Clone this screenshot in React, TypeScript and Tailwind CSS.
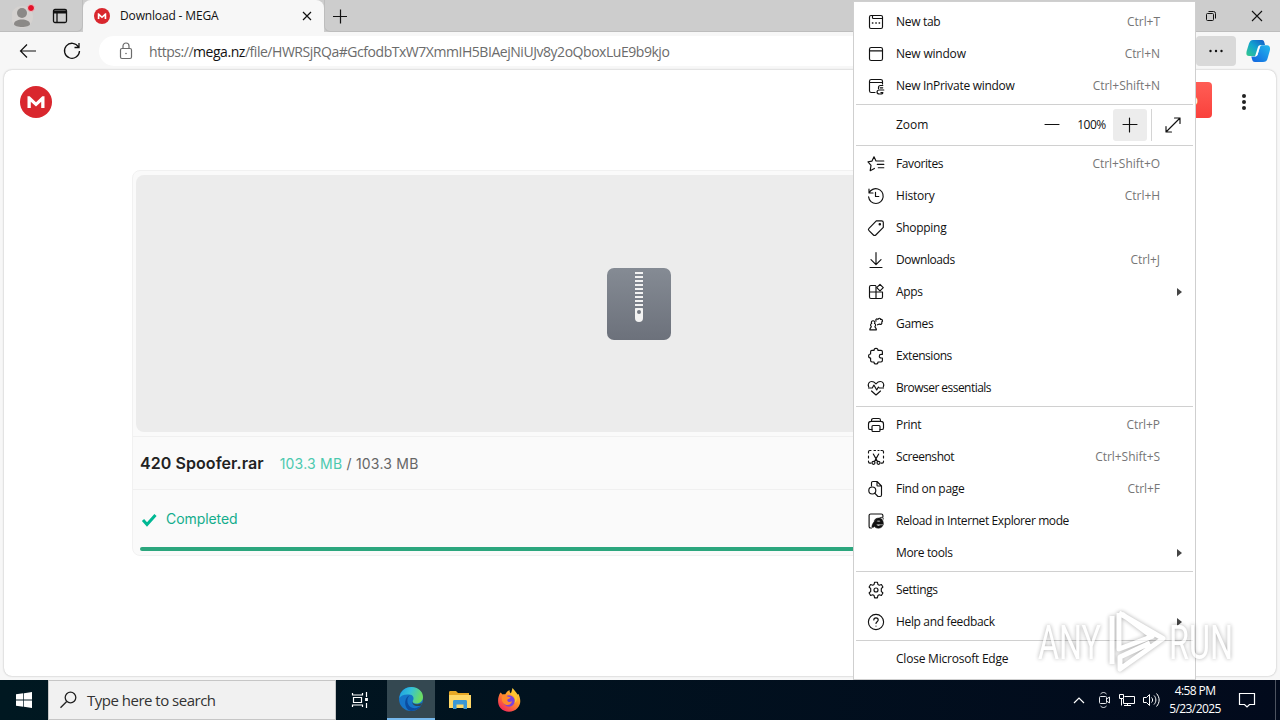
import type { ReactNode } from "react";
import clsx from "clsx";

type MenuEntry = {
  label: string;
  icon?: ReactNode;
  shortcut?: string;
  submenu?: boolean;
  spacing?: string;
};

function Icon({ children, size = 20 }: { children: ReactNode; size?: number }) {
  return (
    <svg
      width={size}
      height={size}
      viewBox="0 0 20 20"
      fill="none"
      stroke="#111"
      strokeWidth="1.15"
      strokeLinecap="round"
      strokeLinejoin="round"
      className="shrink-0">
      {children}
    </svg>
  );
}

const icons = {
  newTab: (
    <>
      <rect x="3.5" y="3.5" width="13" height="13" rx="1.5" />
      <path d="M6.500 3.500v2.200c0 .5.3.8.8.8h9.200" />
      <path d="M6.500 11h.3M9.900 11h.3M13.200 11h.3" strokeWidth="1.6" />
    </>
  ),
  newWindow: <><rect x="3.5" y="3.5" width="13" height="13" rx="1.8" /><path d="M3.5 6.8h13" /></>,
  inPrivate: (
    <>
      <path d="M9 16.5H5.3a1.8 1.8 0 01-1.8-1.8V5.3c0-1 .8-1.8 1.8-1.8h9.4c1 0 1.8.8 1.8 1.8V8M3.5 6.5h13" />
      <path d="M16.8 9.5h-2.3a2 2 0 00-2 2v1.2M14.2 11.8h2.5M17.8 14h-4.3c-3.3 0-3.3 4 0 4h2.2c.8 0 1.2-.6 1.2-1.4h-2" />
    </>
  ),
  favorites: (
    <path d="M8 2.800L6 7.100l-4 .7 3 3.500-.8 5.400 4.200-2.300M8 2.800l2 4.200h7.800M11.300 10.400h6.500M12.300 13.700h5.500" />
  ),
  history: <><path d="M3 3v4h4M3.1 7A7.4 7.4 0 1110 17.5c-4 0-7-3-7.4-6.6" /><path d="M9.5 6.3v4.2h3.3" /></>,
  shopping: (
    <>
      <path d="M10.3 2.8h5.2c1 0 1.8.8 1.8 1.8v4.8L9.8 17c-.7.7-1.7.7-2.4 0L3 12.7c-.7-.7-.7-1.7 0-2.4z" />
      <circle cx="13.8" cy="6.3" r=".7" fill="#111" />
    </>
  ),
  downloads: <path d="M10 2.5v12M5 9.7l5 5 5-5M4 17.5h12" />,
  apps: (
    <>
      <path d="M9.500 3.500H5c-.8 0-1.500.7-1.500 1.500v10c0 .8.7 1.500 1.500 1.500h10c.8 0 1.500-.7 1.500-1.500v-5H3.500M10 4v12.500" />
      <path d="M14 2.300l3.300 3.300L14 8.900l-3.300-3.300z" />
    </>
  ),
  games: (
    <>
      <path d="M3.800 15.800h6.600c0-2-1.500-2-1.500-3.300 1.200-.8.8-2.800-.4-3 1-1.500-.2-2.800-1.400-2.800s-2.400 1.300-1.400 2.800c-1.200.2-1.600 2.200-.4 3 0 1.300-1.500 1.300-1.500 3.300z" />
      <path d="M10 7.200C9.200 5 11.300 4.300 12 5.500c.3-1.700 2.700-1.500 2.500 0 1.800-.6 2.900 1.500 1.200 2.500.9 1.700-.9 3.100-2.300 2l-1.900.8" />
    </>
  ),
  extensions: (
    <path d="M8 5a2 2 0 014 0h3c.8 0 1.4.6 1.4 1.4V9h-1.3a1.8 1.8 0 000 3.6h1.3v2.600c0 .8-.6 1.400-1.400 1.400h-3a2 2 0 01-4 0H6c-.8 0-1.400-.6-1.400-1.400v-2.600a2 2 0 010-4V6.400C4.600 5.600 5.200 5 6 5z" transform="translate(0 -.6)" />
  ),
  essentials: (
    <>
      <path d="M2.700 9C1.300 5.700 3.400 3.500 5.700 3.500c1.800 0 3 .9 4.300 2.300 1.300-1.400 2.500-2.300 4.300-2.300 2.300 0 4.400 2.200 3 5.500" />
      <path d="M2.500 10h3.800l1.600-3 2.800 5 1.700-3 .8 1h4.300M5.500 13l4.500 4 4.500-4" />
    </>
  ),
  print: (
    <>
      <path d="M5.500 6V5.200c0-1 .8-1.700 1.700-1.700h5.600c1 0 1.700.8 1.700 1.700V6M6 14.500H4.200c-1 0-1.700-.7-1.700-1.600V9c0-1.500 1-2.700 2.700-2.700h9.600c1.700 0 2.700 1.200 2.700 2.700v3.900c0 .9-.7 1.600-1.700 1.600H14" />
      <rect x="6" y="10.500" width="8" height="6" rx="1" />
    </>
  ),
  screenshot: (
    <>
      <path d="M2.500 6V4.800c0-.8.600-1.300 1.300-1.300H5M8 3.500h1.500M12 3.500h1M15 3.500h1.200c.8 0 1.300.6 1.300 1.300V6M2.500 9v2M17.500 9v2M2.500 14v.8c0 .8.600 1.300 1.300 1.300H5M17.500 14v.8c0 .8-.6 1.300-1.300 1.300H15" />
      <path d="M7.300 7l4.300 7.600M12.700 7l-4.300 7.600" />
      <circle cx="7.500" cy="15.800" r="1.500" />
      <circle cx="12.500" cy="15.800" r="1.500" />
    </>
  ),
  find: (
    <>
      <path d="M5.500 7V4c0-.8.600-1.500 1.400-1.500H11l4.500 4.500v9c0 .8-.6 1.500-1.400 1.500h-1.600M11 2.500v3.700c0 .5.300.8.800.8h3.700" />
      <circle cx="6.300" cy="11.500" r="3.500" />
      <path d="M8.700 14.200l3.300 3.300" />
    </>
  ),
  ieMode: (
    <>
      <path d="M5.500 17H4.700c-.9 0-1.600-.7-1.600-1.600V4.600C3.100 3.700 3.800 3 4.700 3h10.600c.9 0 1.600.7 1.600 1.600V6" />
      <path
        d="M17.300 13.200H10.500c.2 1.900 2.600 2.300 3.600 1h2.900c-1.300 3.500-6.500 4-8.600 1.400-1.300 1.300-2.400 1.300-2.500.2-.2-2.200 2.500-6.200 5-7.800-1 .3-2 1-2.700 1.700 1.500-3.300 6.800-3.700 8.500-.3.600 1.200.7 2.500.6 3.800zm-6.600-2.400h3.600c-.1-1.900-3.300-1.900-3.600 0z"
        fill="#111"
        fillRule="evenodd"
        strokeWidth=".5"
      />
      <path d="M13.500 7.200c2.300-1.400 4-1.300 3.700.9" strokeWidth="1" />
    </>
  ),
  settings: (
    <>
      <path d="M8.600 2.200h2.800l.5 2.200 1.400.8 2.100-.7 1.500 2.500-1.600 1.600v2.800l1.600 1.600-1.500 2.500-2.100-.7-1.400.8-.5 2.200H8.600l-.5-2.200-1.400-.8-2.100.7L3.100 13l1.600-1.600V8.600L3.100 7l1.500-2.500 2.100.7 1.400-.8z" />
      <circle cx="10" cy="10" r="2" />
    </>
  ),
  help: (
    <>
      <circle cx="10" cy="10" r="7.600" />
      <path d="M7.800 8c0-2.900 4.400-2.900 4.400 0 0 1.700-2.200 1.700-2.200 3.500M10 14v.1" />
    </>
  ),
};

const newItems: MenuEntry[] = [
  { label: "New tab", icon: icons.newTab, shortcut: "Ctrl+T" },
  { label: "New window", icon: icons.newWindow, shortcut: "Ctrl+N", spacing: "tracking-[-0.2px]" },
  { label: "New InPrivate window", icon: icons.inPrivate, shortcut: "Ctrl+Shift+N" },
];

const libraryItems: MenuEntry[] = [
  { label: "Favorites", icon: icons.favorites, shortcut: "Ctrl+Shift+O", spacing: "tracking-[-0.4px]" },
  { label: "History", icon: icons.history, shortcut: "Ctrl+H", spacing: "tracking-[-0.2px]" },
  { label: "Shopping", icon: icons.shopping },
  { label: "Downloads", icon: icons.downloads, shortcut: "Ctrl+J", spacing: "tracking-[-0.42px]" },
  { label: "Apps", icon: icons.apps, submenu: true },
  { label: "Games", icon: icons.games },
  { label: "Extensions", icon: icons.extensions, spacing: "tracking-[-0.45px]" },
  { label: "Browser essentials", icon: icons.essentials, spacing: "tracking-[-0.54px]" },
];

const pageItems: MenuEntry[] = [
  { label: "Print", icon: icons.print, shortcut: "Ctrl+P" },
  { label: "Screenshot", icon: icons.screenshot, shortcut: "Ctrl+Shift+S", spacing: "tracking-[-0.45px]" },
  { label: "Find on page", icon: icons.find, shortcut: "Ctrl+F" },
  { label: "Reload in Internet Explorer mode", icon: icons.ieMode, spacing: "tracking-[-0.4px]" },
  { label: "More tools", submenu: true, spacing: "tracking-[-0.37px]" },
];

const settingsItems: MenuEntry[] = [
  { label: "Settings", icon: icons.settings, spacing: "tracking-[-0.35px]" },
  { label: "Help and feedback", icon: icons.help, submenu: true, spacing: "tracking-[-0.34px]" },
];

function MenuRow({ label, icon, shortcut, submenu, spacing }: MenuEntry) {
  return (
    <div className="flex h-8 items-center pl-3 pr-3">
      <div className="flex w-[30px] shrink-0">{icon && <Icon>{icon}</Icon>}</div>
      <span className={clsx("whitespace-nowrap", spacing ?? "tracking-[-0.3px]")}>{label}</span>
      {shortcut && <span className="ml-auto mr-[23px] tracking-[-0.05px] text-[#767676]">{shortcut}</span>}
      {submenu && (
        <svg className="ml-auto" width="8" height="10" viewBox="0 0 8 10">
          <path d="M2 1l5 4-5 4z" fill="#444" />
        </svg>
      )}
    </div>
  );
}

function Separator() {
  return <div className="mx-[2px] mb-[2px] mt-[2px] h-px bg-[#d0d0d0]" />;
}

function EdgeMenu() {
  return (
    <div className="absolute left-[853px] top-[1px] z-10 h-[679px] w-[343px] border border-[#cfcfcf] bg-white pt-1 text-[12px] text-[#111]">
      {newItems.map((item) => <MenuRow key={item.label} {...item} />)}
      <Separator />
      <div className="flex h-9 items-center pl-[42px]">
        <span className="w-[146px]">Zoom</span>
        <Icon><path d="M3 9.500h14" /></Icon>
        <span className="ml-[8px] w-[43px] text-center tracking-[-0.5px] text-[#111]">100%</span>
        <div className="flex h-8 w-[34px] items-center justify-center rounded-[3px] bg-[#ececec]">
          <Icon><path d="M3 9.500h14M9.500 3v14" /></Icon>
        </div>
        <div className="ml-1 h-8 w-px bg-[#d4d4d4]" />
        <div className="ml-[11px]"><Icon><path d="M3 17L17 3M11.500 3H17v5.500M3 11.500V17h5.500" /></Icon></div>
      </div>
      <Separator />
      {libraryItems.map((item) => <MenuRow key={item.label} {...item} />)}
      <Separator />
      {pageItems.map((item) => <MenuRow key={item.label} {...item} />)}
      <Separator />
      {settingsItems.map((item) => <MenuRow key={item.label} {...item} />)}
      <Separator />
      <MenuRow label="Close Microsoft Edge" spacing="tracking-[-0.22px]" />
    </div>
  );
}

function MegaLogo({ size }: { size: number }) {
  return (
    <svg width={size} height={size} viewBox="0 0 32 32" className="shrink-0">
      <circle cx="16" cy="16" r="16" fill="#d9272e" />
      <path d="M7.500 22V10.300h2.200l6.300 6 6.300-6h2.200V22h-3.300v-6.200L16 20.600l-5.200-4.800V22z" fill="#fff" />
    </svg>
  );
}

function TabBar() {
  return (
    <div className="flex h-8 shrink-0 bg-[#cdcdcd]">
      <div className="flex w-[83px] items-center rounded-br-md border-b border-r border-[#bdbdbd] pl-3">
        <svg width="24" height="28" viewBox="0 0 24 28">
          <circle cx="10" cy="15" r="11" fill="#d5d2d0" />
          <circle cx="10" cy="11" r="5" fill="#8b8987" />
          <path d="M2 22c0-6 16-6 16 0 0 4-16 4-16 0z" fill="#8b8987" />
          <circle cx="19" cy="6" r="3.500" fill="#e3122a" stroke="#e9c6c8" />
        </svg>
        <svg width="16" height="16" viewBox="0 0 16 16" className="ml-4">
          <path d="M3 1.500h10A1.500 1.500 0 0114.500 3v10a1.500 1.500 0 01-1.500 1.500H3A1.500 1.500 0 011.500 13V3A1.500 1.500 0 013 1.500zM5 5v9.500" fill="none" stroke="#111" strokeWidth="1.300" />
          <path d="M1.500 2.500h13v3h-13z" fill="#111" />
        </svg>
      </div>
      <div className="flex w-[241px] items-center rounded-t-lg bg-[#f7f7f7] pl-[11px] pr-[11px]">
        <MegaLogo size={16} />
        <span className="ml-[10px] text-[12px] tracking-[-0.15px] text-[#111]">Download - MEGA</span>
        <svg className="ml-auto" width="12" height="12" viewBox="0 0 12 12">
          <path d="M2 2l8 8M10 2l-8 8" stroke="#111" strokeWidth="1.200" />
        </svg>
      </div>
      <div className="flex flex-1 items-center rounded-bl-md border-b border-l border-[#bdbdbd] pl-[7px] pr-[17px]">
        <svg width="16" height="16" viewBox="0 0 16 16">
          <path d="M1 8.500h14M8.500 1.500v14" stroke="#111" strokeWidth="1.200" />
        </svg>
        <svg className="ml-auto" width="12" height="12" viewBox="0 0 12 12" fill="none" stroke="#111">
          <rect x="1.500" y="3.500" width="7" height="7" rx="1" />
          <path d="M3.500 1.500h5a2 2 0 012 2v5" />
        </svg>
        <svg className="ml-[34px]" width="12" height="12" viewBox="0 0 12 12">
          <path d="M1 1l10 10M11 1L1 11" stroke="#111" strokeWidth="1.100" />
        </svg>
      </div>
    </div>
  );
}

function CopilotIcon() {
  return (
    <svg width="24" height="24" viewBox="0 0 24 24">
      <defs>
        <linearGradient id="copilot-a" x1="0" y1="1" x2="1" y2="0">
          <stop offset="0" stopColor="#36c98a" />
          <stop offset=".5" stopColor="#12a4cf" />
          <stop offset="1" stopColor="#1457c8" />
        </linearGradient>
        <linearGradient id="copilot-b" x1="1" y1="0" x2="0" y2="1">
          <stop offset="0" stopColor="#22b9ee" />
          <stop offset="1" stopColor="#1262df" />
        </linearGradient>
      </defs>
      <path d="M7 1h9c1.500 0 2 1 2.500 3l.5 2h-3c-2 0-2.500 1-3 3l-1.800 6c-.7 2-1.500 2-3.500 2H3c-3 0-3-3-2-6l2-6.500C4 2 5 1 7 1z" fill="url(#copilot-a)" />
      <path d="M17 23H9c-2 0-2.500-1-3-3l-.7-2.500H9c2 0 2.500-1 3-3l1.800-6c.7-2 1.200-2.300 3.200-2.300h4c3 0 3.500 2.800 2.700 5.800l-2 7C21 22 19.500 23 17 23z" fill="url(#copilot-b)" />
      <path d="M14 6.200c-1.500 0-1.800 1-2.200 2.300L9 17.500c1.500 0 2.300-1.100 2.700-2.500l2-6.500c.4-1.300.8-2 1.800-2.300z" fill="#fff" />
    </svg>
  );
}

function Toolbar() {
  return (
    <div className="flex h-[38px] shrink-0 items-center bg-[#f7f7f7] pl-[18px] pr-[10px]">
      <svg width="20" height="20" viewBox="0 0 20 20" fill="none" stroke="#111" strokeWidth="1.200">
        <path d="M18 10H2.500M9 3.500L2.500 10 9 16.500" />
      </svg>
      <svg className="ml-6" width="20" height="20" viewBox="0 0 20 20" fill="none" stroke="#111" strokeWidth="1.300">
        <path d="M16.500 6A7.500 7.500 0 1017.500 10M17 2v4.500h-4.500" />
      </svg>
      <div className="ml-[17px] flex h-[30px] flex-1 items-center rounded-l-full bg-white pl-[19px]">
        <svg width="16" height="18" viewBox="0 0 16 18" fill="none" stroke="#6b6b6b" strokeWidth="1.200">
          <rect x="2.500" y="6.500" width="11" height="10" rx="1.500" />
          <path d="M5 6.500V4a3 3 0 016 0v2.500" />
          <circle cx="8" cy="11.500" r=".8" fill="#6b6b6b" stroke="none" />
        </svg>
        <div className="ml-[15px] whitespace-nowrap text-[14px] tracking-[-0.46px] text-[#6b6b6b]">
          https://<span className="text-[#111]">mega.nz</span>/file/HWRSjRQa#GcfodbTxW7XmmIH5BIAejNiUJv8y2oQboxLuE9b9kjo
        </div>
      </div>
      <div className="flex h-[30px] w-10 items-center justify-center rounded bg-[#d9d9d9]">
        <svg width="16" height="4" viewBox="0 0 16 4" fill="#111">
          <circle cx="2.500" cy="2" r="1.200" /><circle cx="8" cy="2" r="1.200" /><circle cx="13.500" cy="2" r="1.200" />
        </svg>
      </div>
      <div className="ml-[10px]"><CopilotIcon /></div>
    </div>
  );
}

function ArchiveIcon() {
  return (
    <svg width="64" height="72" viewBox="0 0 64 72">
      <defs>
        <linearGradient id="archive" x1="0" y1="0" x2="0" y2="1">
          <stop offset="0" stopColor="#858b94" />
          <stop offset="1" stopColor="#6c717b" />
        </linearGradient>
      </defs>
      <rect width="64" height="72" rx="7" fill="url(#archive)" />
      {[4, 8, 12, 16, 20, 24, 28, 32, 36].map((y) => (
        <rect key={y} x="28" y={y} width="8" height="2" fill="#f2f2f2" />
      ))}
      <path d="M29 40h6c.6 0 1 .4 1 1v9a4 4 0 01-8 0v-9c0-.6.4-1 1-1z" fill="#f2f2f2" />
      <circle cx="32" cy="44" r="2" fill="#747982" />
    </svg>
  );
}

function DownloadPage() {
  return (
    <div className="flex min-h-0 flex-1 flex-col bg-[#f7f7f7] px-1 pb-1">
      <div className="flex-1 overflow-hidden rounded-lg bg-white font-[Inter,sans-serif] shadow-[0_0_2px_rgba(0,0,0,0.3)]">
        <div className="flex h-[64px] items-center pl-4 pr-[28px]">
          <MegaLogo size={32} />
          <div className="ml-auto mt-[-4px] flex h-9 w-24 items-center justify-end rounded bg-gradient-to-b from-[#ff5d55] to-[#fa403c] pr-[14px] text-sm text-white">
            p
          </div>
          <svg className="ml-[28px]" width="8" height="18" viewBox="0 0 8 18" fill="#222">
            <circle cx="4" cy="3" r="2" /><circle cx="4" cy="9" r="2" /><circle cx="4" cy="15" r="2" />
          </svg>
        </div>
        <div className="ml-[128px] mt-[36px] h-[386px] w-[1014px] rounded-lg border border-[#f1f1f1] bg-[#fafafa]">
          <div className="p-[3px] pt-1">
            <div className="flex h-[257px] items-center justify-center rounded-lg bg-[#ececec]">
              <ArchiveIcon />
            </div>
          </div>
          <div className="mt-px flex h-[54px] items-center border-y border-[#f0f0f0] pl-[7px]">
            <span className="text-[16px] font-semibold tracking-[0.07px] text-[#222]">420 Spoofer.rar</span>
            <span className="ml-[16px] text-[14px] tracking-[0.22px] text-[#666]">
              <span className="text-[#4cc9af]">103.3 MB</span> / 103.3 MB
            </span>
          </div>
          <div className="flex h-[57px] items-center pl-[7px] text-[14px] tracking-[-0.08px] text-[#13ad8c]">
            <svg className="mt-[3px]" width="18" height="16" viewBox="0 0 18 16">
              <path d="M3 8l4 4.500L15.500 3" fill="none" stroke="#00b894" strokeWidth="3" />
            </svg>
            <span className="ml-2">Completed</span>
          </div>
          <div className="ml-[7px] h-1 rounded-full bg-[#2ba67d]" />
        </div>
      </div>
    </div>
  );
}

function Watermark() {
  return (
    <svg
      className="pointer-events-none absolute left-[1032px] top-[604px] z-20 overflow-visible opacity-70 drop-shadow-[0_0_2px_rgba(0,0,0,0.45)]"
      width="208"
      height="74"
      viewBox="0 0 208 74"
      fill="#fff"
      fontFamily="Roboto, sans-serif"
      fontSize="49">
      <text x="6" y="55" textLength="63" lengthAdjust="spacingAndGlyphs">ANY</text>
      <text x="137" y="55" textLength="64" lengthAdjust="spacingAndGlyphs">RUN</text>
      <path d="M80 12v48M87 9v36l33-12.500L90 10M87 9l44 25.500L88 65V53l30-14" fill="none" stroke="#fff" strokeWidth="5" strokeLinejoin="round" />
    </svg>
  );
}

function EdgeIcon() {
  return (
    <svg width="24" height="24" viewBox="0 0 24 24">
      <defs>
        <linearGradient id="edge-top" x1="0" y1="0" x2="1" y2=".3">
          <stop offset="0" stopColor="#1b9de2" />
          <stop offset=".5" stopColor="#35c1d8" />
          <stop offset="1" stopColor="#6bdc63" />
        </linearGradient>
      </defs>
      <circle cx="12" cy="12" r="12" fill="#1675c8" />
      <path d="M.500 11C1 4.500 6 0 12.500 0 19 0 24 4.500 24 10c0 4-3 6.500-6.500 6.500-3 0-4.500-1.500-3.500-3 1.500-2.500 0-6-4-6C5 7 1.500 9 .500 11z" fill="url(#edge-top)" />
      <path d="M11 8c-4.500 3.500-3 12 3 13 3 .5 6-.5 8.300-2.700C20 22.300 16 24 12 24 5 22.500 4 11 11 8z" fill="#0c4da0" />
      <path d="M13.500 14c-.5 3.500 5 4.500 9.500 1.700l-.8 2.800c-5 1.500-9.700 0-8.700-4.500z" fill="#33474f" />
    </svg>
  );
}

function FolderIcon() {
  return (
    <svg width="22" height="20" viewBox="0 0 22 20">
      <path d="M0 2.500C0 1.500.500 1 1.500 1H7l2 2h11v4H0z" fill="#e8a825" />
      <path d="M0 5h22v13H0z" fill="#ffd766" />
      <path d="M4 19v-7.500c0-1 .500-1.500 1.500-1.500h11c1 0 1.500.5 1.500 1.500V19h-3.500v-4.500h-7V19z" fill="#3c97d3" />
    </svg>
  );
}

function FirefoxIcon() {
  return (
    <svg width="24" height="24" viewBox="0 0 24 24">
      <defs>
        <linearGradient id="firefox" x1=".9" y1="0" x2=".2" y2="1">
          <stop offset="0" stopColor="#ffe643" />
          <stop offset=".45" stopColor="#ff9429" />
          <stop offset="1" stopColor="#f3205c" />
        </linearGradient>
      </defs>
      <path d="M3.500 4.500l2.200 2c.8-.4 1.700-.4 2.600-.2C9.500 4 11 2.700 12.500 2c0 2 .5 2.500 1.500 3.500L15.500 0c2 2.500 4 4.500 5 6.500L21.500 6C24 12 24 16 20.500 20c-4.500 5-12.500 5-17 0C0 16 .500 9 3.500 4.500z" fill="url(#firefox)" />
      <circle cx="12" cy="13" r="5.800" fill="#7b42dc" />
      <path d="M5 8c2-.8 4-.5 5.500.5l3 .8c0 1.500-3 1.500-3.300 2.700.3 2.500 3.300 2.500 5 1-1 3.500-4 5-7 3.500-3-1.500-4-4.500-3.200-8.500z" fill="#ff8a2b" />
      <path d="M13 6c4 1 6 4.500 4.500 9 2-1 3-3.500 2.500-6l-3.500-6z" fill="#ffc62e" />
    </svg>
  );
}

function Taskbar() {
  return (
    <div className="flex h-10 shrink-0 items-center bg-gradient-to-r from-[#001821] to-[#020a1c] text-white">
      <div className="flex w-12 justify-center">
        <svg width="16" height="16" viewBox="0 0 16 16" fill="#fff">
          <path d="M0 2.300L7.300 1.300v6.300H0zM8 1.200L16 0v7.600H8zM0 8.400h7.300v6.300L0 13.700zM8 8.400h8V16l-8-1.200z" />
        </svg>
      </div>
      <div className="flex h-10 w-[288px] items-center border border-[#c6c6c6] bg-[#f1f1f1] pl-[11px]">
        <svg width="18" height="18" viewBox="0 0 18 18" fill="none" stroke="#222" strokeWidth="1.300">
          <circle cx="10.500" cy="6.500" r="5.300" />
          <path d="M6.700 10.500L.500 16.800" />
        </svg>
        <span className="ml-[9px] text-[15px] tracking-[-0.5px] text-[#333]">Type here to search</span>
      </div>
      <div className="flex w-[51px] justify-center pr-1">
        <svg width="18" height="18" viewBox="0 0 18 18" fill="none" stroke="#fff" strokeWidth="1.200">
          <path d="M1.500 2v2h10V2M1.500 16v-2h10v2M2.500 6.500h8v5h-8zM15.500 1v5M15.500 12v5" />
          <path d="M15.500 7v3" strokeWidth="2.800" />
        </svg>
      </div>
      <div className="flex h-10 w-12 items-center justify-center border-b-2 border-[#76b9ed] bg-[#344851]"><EdgeIcon /></div>
      <div className="flex w-[50px] justify-center"><FolderIcon /></div>
      <div className="flex w-[48px] justify-center"><FirefoxIcon /></div>
      <div className="ml-auto flex items-center">
        <svg width="12" height="8" viewBox="0 0 12 8"><path d="M1 7l5-5 5 5" fill="none" stroke="#fff" strokeWidth="1.200" /></svg>
        <svg className="ml-[13px]" width="13" height="18" viewBox="0 0 13 18" fill="none" stroke="#e6e9ec">
          <rect x="1.500" y="5.500" width="7" height="7" rx="1" />
          <path d="M8.500 8l3-2v6l-3-2M2.500 3c2-2 4-2 6 0M2.500 15c2 2 4 2 6 0" />
        </svg>
        <svg className="ml-[8px]" width="17" height="16" viewBox="0 0 17 16" fill="none" stroke="#fff">
          <path d="M5.500 4.500h10v7h-11V7M8.500 11.500v2M5 13.500h7M.500 2.500h4v4h-4zM2.500 6.500v7" />
        </svg>
        <svg className="ml-[7px]" width="17" height="16" viewBox="0 0 17 16" fill="none" stroke="#fff">
          <path d="M.500 5.500h3L6.500 2.500v11l-3-3h-3zM8.500 5.500c1.500 1.500 1.500 3.500 0 5M11 3.500c2.500 2.500 2.500 6.500 0 9M13.500 1.500c3.500 4 3.500 9 0 13" />
        </svg>
        <div className="ml-[7px] w-[56px] text-center text-[12px] leading-[18px] tracking-[-0.6px]">
          <div>4:58 PM</div>
          <div>5/23/2025</div>
        </div>
        <svg className="ml-[15px]" width="18" height="18" viewBox="0 0 18 18" fill="none" stroke="#fff" strokeWidth="1.200">
          <path d="M1.500 2.500h15v11h-5L9 16l-2.500-2.500h-5z" />
        </svg>
        <div className="ml-[19px] h-10 w-px bg-[#4d5360]" />
        <div className="w-1" />
      </div>
    </div>
  );
}

export default function App() {
  return (
    <div className="relative flex h-[720px] w-[1280px] flex-col overflow-hidden bg-[#f7f7f7] font-['Open_Sans','Noto_Sans',sans-serif]">
      <TabBar />
      <Toolbar />
      <DownloadPage />
      <Taskbar />
      <EdgeMenu />
      <Watermark />
    </div>
  );
}
